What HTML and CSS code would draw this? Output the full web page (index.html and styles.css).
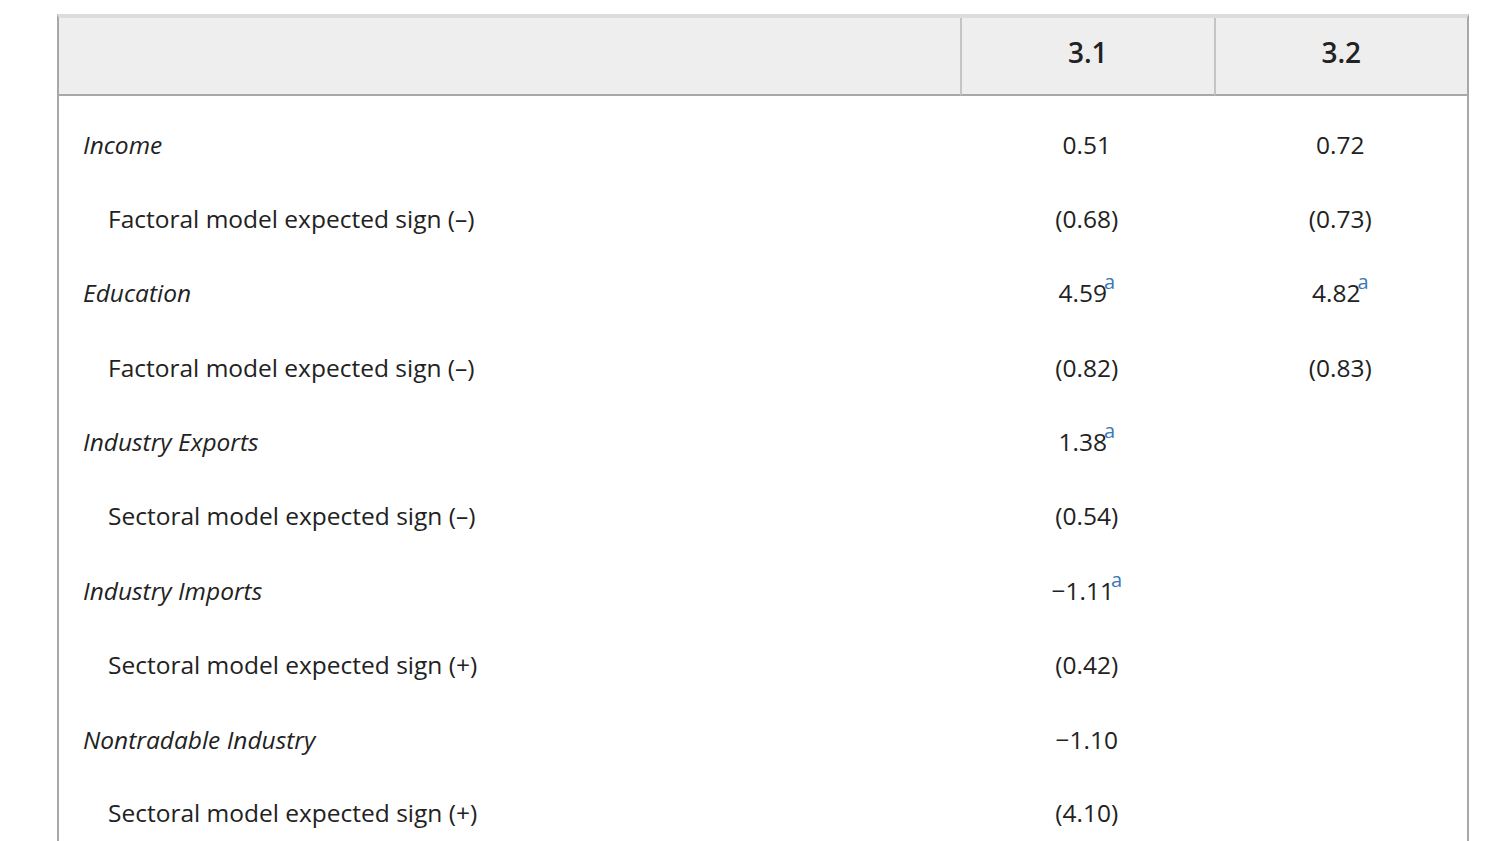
FILE: index.html
```html
<!DOCTYPE html>
<html>
<head>
<meta charset="utf-8">
<link rel="stylesheet" href="styles.css">
</head>
<body>
<div class="wrap">
<table class="tbl">
  <colgroup>
    <col class="c-label">
    <col class="c-num">
    <col class="c-num">
  </colgroup>
  <thead>
    <tr><th class="blank"></th><th>3.1</th><th>3.2</th></tr>
  </thead>
  <tbody>
    <tr><td class="var">Income</td><td>0.51</td><td>0.72</td></tr>
    <tr><td class="sub">Factoral model expected sign (–)</td><td>(0.68)</td><td>(0.73)</td></tr>
    <tr><td class="var">Education</td><td>4.59<sup>a</sup></td><td>4.82<sup>a</sup></td></tr>
    <tr><td class="sub">Factoral model expected sign (–)</td><td>(0.82)</td><td>(0.83)</td></tr>
    <tr><td class="var">Industry Exports</td><td>1.38<sup>a</sup></td><td></td></tr>
    <tr><td class="sub">Sectoral model expected sign (–)</td><td>(0.54)</td><td></td></tr>
    <tr><td class="var">Industry Imports</td><td>−1.11<sup>a</sup></td><td></td></tr>
    <tr><td class="sub">Sectoral model expected sign (+)</td><td>(0.42)</td><td></td></tr>
    <tr><td class="var">Nontradable Industry</td><td>−1.10</td><td></td></tr>
    <tr class="last"><td class="sub">Sectoral model expected sign (+)</td><td>(4.10)</td><td></td></tr>
  </tbody>
</table>
</div>
</body>
</html>
```
FILE: styles.css
```css
html, body {
  margin: 0;
  padding: 0;
  background: #fff;
}
body {
  font-family: "Open Sans", "Noto Sans", sans-serif;
  color: #222;
  overflow: hidden;
  height: 841px;
}
.wrap {
  padding: 14px 0 0 57px;
}
.tbl {
  width: 1411px;
  box-sizing: border-box;
  border-collapse: separate;
  border-spacing: 0;
  border-top: 4px solid #dcdcdc;
  border-left: 2px solid #a8a8a8;
  border-right: 2px solid #a8a8a8;
  table-layout: fixed;
  font-size: 24.5px;
}
.c-label { width: 901px; }
.c-num { width: 253.5px; }
.tbl th {
  background: #eeeeee;
  height: 78px;
  padding: 0 0 8px;
  box-sizing: border-box;
  font-weight: 600;
  font-size: 28px;
  color: #222;
  text-align: center;
  vertical-align: middle;
  border-bottom: 2px solid #a8a8a8;
  border-left: 2px solid #c4c4c4;
}
.tbl th.blank { border-left: none; }
.tbl td {
  height: 74.4px;
  box-sizing: border-box;
  padding: 22px 0 0;
  text-align: center;
  vertical-align: middle;
  line-height: 1.2;
  white-space: nowrap;
}
.tbl tr.last td {
  height: 90px;
  padding-top: 4px;
}
.tbl td.var,
.tbl td.sub {
  text-align: left;
  padding-left: 24px;
}
.tbl td.var { font-style: italic; }
.tbl td.sub { padding-left: 49px; }
.tbl sup {
  font-size: 20px;
  line-height: 0;
  color: #3b78b8;
  margin-left: -3px;
  vertical-align: 0;
  position: relative;
  top: -13px;
}
```
